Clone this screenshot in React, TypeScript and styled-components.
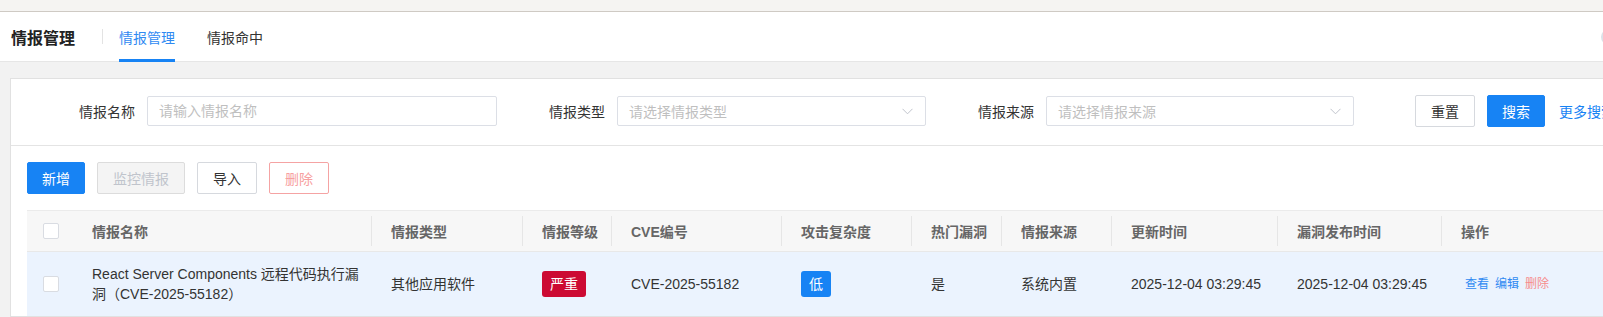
import React from 'react';
import styled, { createGlobalStyle } from 'styled-components';

const BLUE = '#1783f4';

const GlobalStyle = createGlobalStyle`
  html, body { margin: 0; padding: 0; overflow: hidden; background: #f2f2f2; }
  body {
    font-family: "Liberation Sans", "Noto Sans CJK SC", Arial, sans-serif;
    color: #333;
    font-size: 14px;
  }
  * { box-sizing: border-box; }
`;

const Page = styled.div`
  width: 1720px;
  min-height: 317px;
  background: #f2f2f2;
`;

const TopStrip = styled.div`
  height: 12px;
  background: #f5f4f2;
  border-bottom: 1px solid #cfcac4;
`;

const NavBar = styled.div`
  width: 100vw;
  height: 50px;
  background: #fff;
  border-bottom: 1px solid #e6e6e6;
  display: flex;
  align-items: stretch;
  padding-left: 11px;
`;

const NavTitle = styled.div`
  display: flex;
  align-items: center;
  font-size: 16px;
  font-weight: 700;
  color: #222;
`;

const NavDivider = styled.div`
  align-self: center;
  width: 1px;
  height: 15px;
  background: #e3e3e3;
  margin: 0 16px 0 27px;
`;

const Tabs = styled.div`
  display: flex;
  gap: 32px;
`;

const Tab = styled.div<{ $active?: boolean }>`
  display: flex;
  align-items: center;
  padding-top: 2px;
  font-size: 14px;
  color: ${(p) => (p.$active ? '#2f8af2' : '#333')};
  border-bottom: 3px solid ${(p) => (p.$active ? BLUE : 'transparent')};
  margin-bottom: -1px;
`;

const NavAvatar = styled.div`
  align-self: center;
  margin-left: auto;
  margin-right: -14px;
  width: 16px;
  height: 16px;
  border-radius: 50%;
  background: #dbe1e8;
`;

const Main = styled.div`
  padding: 16px 0 0 10px;
`;

const Panel = styled.div`
  background: #fff;
  border: 1px solid #e1e1e1;
  border-right: none;
`;

const SearchSection = styled.div`
  display: flex;
  align-items: center;
  gap: 52px;
  padding: 16px 0 18px 68px;
  border-bottom: 1px solid #e4e4e4;
`;

const FormItem = styled.div`
  display: flex;
  align-items: center;
  gap: 12px;
`;

const FormLabel = styled.label`
  font-size: 14px;
  color: #333;
  white-space: nowrap;
`;

const TextInput = styled.input<{ $w: number }>`
  width: ${(p) => p.$w}px;
  height: 30px;
  border: 1px solid #dcdfe6;
  border-radius: 2px;
  padding: 0 11px;
  font: inherit;
  font-size: 14px;
  color: #333;
  outline: none;
  &::placeholder { color: #bfbfbf; }
`;

const SelectBox = styled.div<{ $w: number }>`
  width: ${(p) => p.$w}px;
  height: 30px;
  border: 1px solid #dcdfe6;
  border-radius: 2px;
  padding: 0 12px 0 11px;
  display: flex;
  align-items: center;
  justify-content: space-between;
`;

const Placeholder = styled.span`
  color: #bfbfbf;
  font-size: 14px;
`;

const SearchActions = styled.div`
  display: flex;
  align-items: center;
  gap: 12px;
  margin-left: 9px;
`;

const Button = styled.button<{ $variant?: 'primary' | 'default' | 'disabled' | 'danger' }>`
  height: 32px;
  padding: ${(p) => (p.$variant === 'primary' ? '0 14px' : '0 15px')};
  border-radius: 2px;
  font: inherit;
  font-size: 14px;
  cursor: pointer;
  white-space: nowrap;
  border: 1px solid
    ${(p) =>
      p.$variant === 'primary'
        ? BLUE
        : p.$variant === 'danger'
        ? '#f5a3a3'
        : p.$variant === 'disabled'
        ? '#dcdcdc'
        : '#d6d9de'};
  background: ${(p) =>
    p.$variant === 'primary' ? BLUE : p.$variant === 'disabled' ? '#f4f4f4' : '#fff'};
  color: ${(p) =>
    p.$variant === 'primary'
      ? '#fff'
      : p.$variant === 'danger'
      ? '#f7a0a0'
      : p.$variant === 'disabled'
      ? '#c0c4cc'
      : '#333'};
`;

const MoreLink = styled.span`
  color: ${BLUE};
  font-size: 14px;
  margin-left: 2px;
  white-space: nowrap;
`;

const ListSection = styled.div`
  padding: 16px 0 0 16px;
`;

const Toolbar = styled.div`
  display: flex;
  gap: 12px;
  margin-bottom: 16px;
`;

const Table = styled.table`
  border-collapse: collapse;
  table-layout: fixed;
  width: 1650px;
  border-top: 1px solid #ebebeb;
`;

const Th = styled.th<{ $divider?: boolean; $check?: boolean }>`
  position: relative;
  height: 41px;
  background: #f7f7f7;
  border-bottom: 1px solid #e8e8e8;
  text-align: left;
  font-size: 14px;
  font-weight: 700;
  color: #666;
  padding: ${(p) => (p.$check ? '0 0 0 16px' : '0 8px 0 19px')};
  white-space: nowrap;
  &::after {
    content: '';
    display: ${(p) => (p.$divider ? 'block' : 'none')};
    position: absolute;
    right: 0;
    top: 50%;
    transform: translateY(-50%);
    width: 1px;
    height: 30px;
    background: #e6e6e6;
  }
`;

const Tr = styled.tr`
  background: #ebf3fe;
`;

const Td = styled.td<{ $check?: boolean }>`
  padding: ${(p) => (p.$check ? '12px 0 12px 16px' : '12px 8px 12px 19px')};
  line-height: 20px;
  font-size: 14px;
  color: #333;
  vertical-align: middle;
`;

const Checkbox = styled.span`
  display: block;
  width: 16px;
  height: 16px;
  border: 1px solid #d9dce2;
  border-radius: 2px;
  background: #fff;
`;

const Tag = styled.span<{ $color: string }>`
  display: inline-flex;
  align-items: center;
  height: 26px;
  padding: 0 8px;
  border-radius: 3px;
  background: ${(p) => p.$color};
  color: #fff;
  font-size: 14px;
`;

const Actions = styled.div`
  display: flex;
  gap: 6px;
  padding-left: 4px;
`;

const ActionLink = styled.span<{ $danger?: boolean }>`
  font-size: 12px;
  color: ${(p) => (p.$danger ? '#f78b8b' : '#2f8af2')};
  cursor: pointer;
`;

const Chevron = () => (
  <svg width="11" height="7" viewBox="0 0 11 7" fill="none">
    <polyline points="0.5,0.8 5.5,5.8 10.5,0.8" stroke="#c0c4cc" strokeWidth="1" />
  </svg>
);

const columns = [
  { key: 'check', width: 46 },
  { key: 'name', width: 299, title: '情报名称' },
  { key: 'type', width: 151, title: '情报类型' },
  { key: 'level', width: 89, title: '情报等级' },
  { key: 'cve', width: 170, title: 'CVE编号' },
  { key: 'complex', width: 130, title: '攻击复杂度' },
  { key: 'hot', width: 90, title: '热门漏洞' },
  { key: 'source', width: 110, title: '情报来源' },
  { key: 'update', width: 166, title: '更新时间' },
  { key: 'publish', width: 164, title: '漏洞发布时间' },
  { key: 'action', width: 235, title: '操作' },
];

const rows = [
  {
    name: 'React Server Components 远程代码执行漏洞（CVE-2025-55182）',
    type: '其他应用软件',
    level: '严重',
    cve: 'CVE-2025-55182',
    complex: '低',
    hot: '是',
    source: '系统内置',
    update: '2025-12-04 03:29:45',
    publish: '2025-12-04 03:29:45',
  },
];

export default function App() {
  return (
    <Page>
      <GlobalStyle />
      <TopStrip />
      <NavBar>
        <NavTitle>情报管理</NavTitle>
        <NavDivider />
        <Tabs>
          <Tab $active>情报管理</Tab>
          <Tab>情报命中</Tab>
        </Tabs>
        <NavAvatar />
      </NavBar>
      <Main>
        <Panel>
          <SearchSection>
            <FormItem>
              <FormLabel>情报名称</FormLabel>
              <TextInput $w={350} placeholder="请输入情报名称" />
            </FormItem>
            <FormItem>
              <FormLabel>情报类型</FormLabel>
              <SelectBox $w={309}>
                <Placeholder>请选择情报类型</Placeholder>
                <Chevron />
              </SelectBox>
            </FormItem>
            <FormItem>
              <FormLabel>情报来源</FormLabel>
              <SelectBox $w={308}>
                <Placeholder>请选择情报来源</Placeholder>
                <Chevron />
              </SelectBox>
            </FormItem>
            <SearchActions>
              <Button $variant="default">重置</Button>
              <Button $variant="primary">搜索</Button>
              <MoreLink>更多搜索</MoreLink>
            </SearchActions>
          </SearchSection>
          <ListSection>
            <Toolbar>
              <Button $variant="primary">新增</Button>
              <Button $variant="disabled">监控情报</Button>
              <Button $variant="default">导入</Button>
              <Button $variant="danger">删除</Button>
            </Toolbar>
            <Table>
              <colgroup>
                {columns.map((c) => (
                  <col key={c.key} style={{ width: c.width }} />
                ))}
              </colgroup>
              <thead>
                <tr>
                  {columns.map((c) =>
                    c.key === 'check' ? (
                      <Th key={c.key} $check>
                        <Checkbox />
                      </Th>
                    ) : (
                      <Th key={c.key} $divider={c.key !== 'action'}>
                        {c.title}
                      </Th>
                    )
                  )}
                </tr>
              </thead>
              <tbody>
                {rows.map((r) => (
                  <Tr key={r.cve}>
                    <Td $check>
                      <Checkbox />
                    </Td>
                    <Td>{r.name}</Td>
                    <Td>{r.type}</Td>
                    <Td>
                      <Tag $color="#cc0a33">{r.level}</Tag>
                    </Td>
                    <Td>{r.cve}</Td>
                    <Td>
                      <Tag $color={BLUE}>{r.complex}</Tag>
                    </Td>
                    <Td>{r.hot}</Td>
                    <Td>{r.source}</Td>
                    <Td>{r.update}</Td>
                    <Td>{r.publish}</Td>
                    <Td>
                      <Actions>
                        <ActionLink>查看</ActionLink>
                        <ActionLink>编辑</ActionLink>
                        <ActionLink $danger>删除</ActionLink>
                      </Actions>
                    </Td>
                  </Tr>
                ))}
              </tbody>
            </Table>
          </ListSection>
        </Panel>
      </Main>
    </Page>
  );
}
